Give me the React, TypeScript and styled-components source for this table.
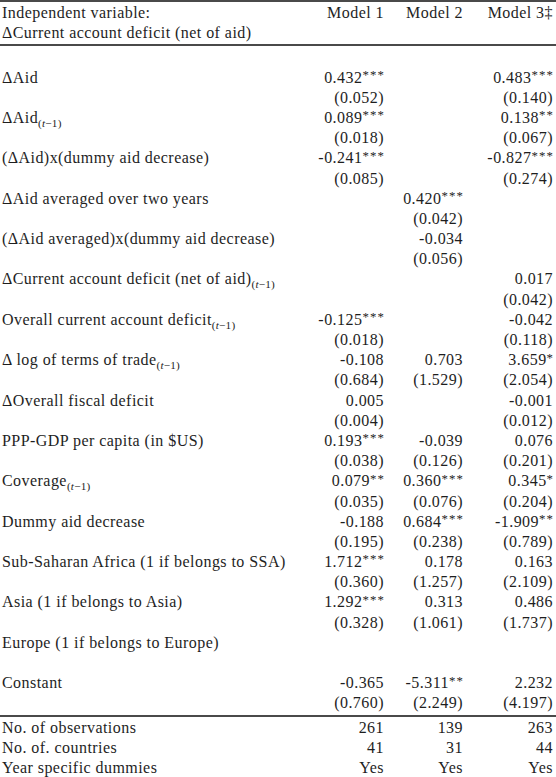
import React, { ReactNode } from "react"
import styled, { createGlobalStyle } from "styled-components"

type Entry = {
  label?: ReactNode
  values: string[]
}

const T = () => (
  <Sub>
    (<i>t</i>−1)
  </Sub>
)

// each variable is a coefficient line followed by a line of standard errors
const variables: { label: ReactNode; coef: string[]; se: string[] }[] = [
  { label: <>ΔAid</>, coef: ["0.432***", "", "0.483***"], se: ["(0.052)", "", "(0.140)"] },
  { label: <>ΔAid<T /></>, coef: ["0.089***", "", "0.138**"], se: ["(0.018)", "", "(0.067)"] },
  { label: <>(ΔAid)x(dummy aid decrease)</>, coef: ["-0.241***", "", "-0.827***"], se: ["(0.085)", "", "(0.274)"] },
  { label: <>ΔAid averaged over two years</>, coef: ["", "0.420***", ""], se: ["", "(0.042)", ""] },
  { label: <>(ΔAid averaged)x(dummy aid decrease)</>, coef: ["", "-0.034", ""], se: ["", "(0.056)", ""] },
  { label: <>ΔCurrent account deficit (net of aid)<T /></>, coef: ["", "", "0.017"], se: ["", "", "(0.042)"] },
  { label: <>Overall current account deficit<T /></>, coef: ["-0.125***", "", "-0.042"], se: ["(0.018)", "", "(0.118)"] },
  { label: <>Δ&thinsp;log of terms of trade<T /></>, coef: ["-0.108", "0.703", "3.659*"], se: ["(0.684)", "(1.529)", "(2.054)"] },
  { label: <>ΔOverall fiscal deficit</>, coef: ["0.005", "", "-0.001"], se: ["(0.004)", "", "(0.012)"] },
  { label: <>PPP-GDP per capita (in $US)</>, coef: ["0.193***", "-0.039", "0.076"], se: ["(0.038)", "(0.126)", "(0.201)"] },
  { label: <>Coverage<T /></>, coef: ["0.079**", "0.360***", "0.345*"], se: ["(0.035)", "(0.076)", "(0.204)"] },
  { label: <>Dummy aid decrease</>, coef: ["-0.188", "0.684***", "-1.909**"], se: ["(0.195)", "(0.238)", "(0.789)"] },
  { label: <>Sub-Saharan Africa (1 if belongs to SSA)</>, coef: ["1.712***", "0.178", "0.163"], se: ["(0.360)", "(1.257)", "(2.109)"] },
  { label: <>Asia (1 if belongs to Asia)</>, coef: ["1.292***", "0.313", "0.486"], se: ["(0.328)", "(1.061)", "(1.737)"] },
]

const body: Entry[] = [
  { values: [] },
  ...variables.flatMap((v) => [
    { label: v.label, values: v.coef },
    { values: v.se },
  ]),
  { label: "Europe (1 if belongs to Europe)", values: [] },
  { values: [] },
  { label: "Constant", values: ["-0.365", "-5.311**", "2.232"] },
  { values: ["(0.760)", "(2.249)", "(4.197)"] },
]

const footer: Entry[] = [
  { label: "No. of observations", values: ["261", "139", "263"] },
  { label: "No. of. countries", values: ["41", "31", "44"] },
  { label: "Year specific dummies", values: ["Yes", "Yes", "Yes"] },
]

function Value({ text }: { text: string }) {
  const m = text.match(/^(.*?)(\*+)$/)
  if (!m) return <>{text}</>
  return (
    <>
      {m[1]}
      <Stars>{m[2]}</Stars>
    </>
  )
}

function Line({ entry }: { entry: Entry }) {
  return (
    <Row>
      <Label>{entry.label}</Label>
      {[0, 1, 2].map((i) => (
        <Cell key={i}>{entry.values[i] ? <Value text={entry.values[i]} /> : null}</Cell>
      ))}
    </Row>
  )
}

export default function App() {
  return (
    <>
      <GlobalStyle />
      <Table>
        <Rule />
        <Row>
          <Label>Independent variable:</Label>
          <Cell>Model 1</Cell>
          <Cell>Model 2</Cell>
          <Cell>Model 3‡</Cell>
        </Row>
        <Row>
          <Label>ΔCurrent account deficit (net of aid)</Label>
        </Row>
        <Rule />
        {body.map((e, i) => (
          <Line key={i} entry={e} />
        ))}
        <Rule />
        {footer.map((e, i) => (
          <Line key={i} entry={e} />
        ))}
        <Rule />
      </Table>
    </>
  )
}

const GlobalStyle = createGlobalStyle`
  html, body {
    margin: 0;
    padding: 0;
    background: #fff;
  }
  body {
    font-family: "Liberation Serif", "Times New Roman", serif;
    color: #1e1e1e;
  }
`

const Table = styled.div`
  width: 556px;
  display: flex;
  flex-direction: column;
  font-size: 16px;
  letter-spacing: 0.45px;
`

const Rule = styled.div`
  height: 2px;
  background: #4a4a4a;
  margin: 1px 0;
  &:first-child {
    margin-top: 0;
  }
`

const Row = styled.div`
  display: grid;
  grid-template-columns: 1fr 82px 79px 90px;
  height: 20.2px;
  line-height: 20.2px;
  padding: 0 3px 0 2px;
  white-space: nowrap;
`

const Label = styled.div`
  text-align: left;
`

const Cell = styled.div`
  text-align: right;
`

const Stars = styled.span`
  font-size: 0.8em;
  position: relative;
  top: -0.28em;
  letter-spacing: 1.2px;
  margin-right: -1.2px;
`

const Sub = styled.span`
  font-size: 0.7em;
  position: relative;
  top: 0.35em;
  letter-spacing: 0.2px;
`
